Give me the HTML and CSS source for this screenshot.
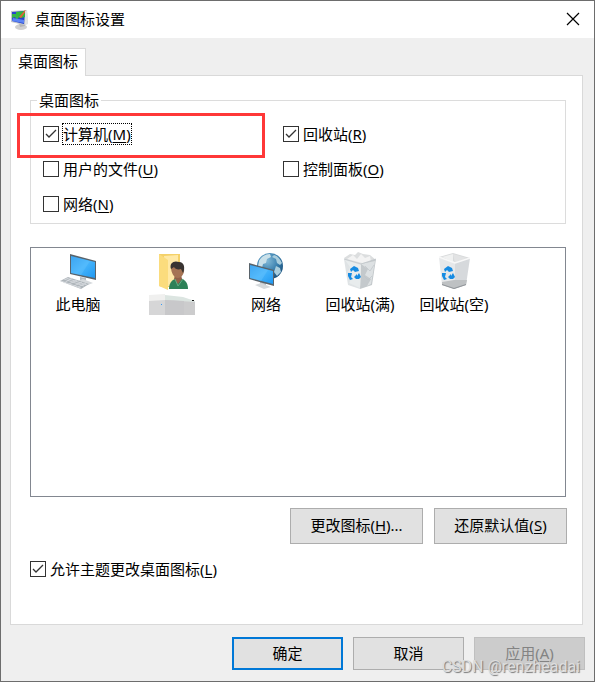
FILE: index.html
```html
<!DOCTYPE html>
<html lang="zh-CN">
<head>
    <meta charset="UTF-8">
    <meta name="viewport" content="width=device-width, initial-scale=1.0">
    <title>桌面图标设置</title>
    <link rel="stylesheet" href="styles.css">
</head>
<body>
    <div class="window">
        <header class="titlebar">
            <svg class="app-icon" width="20" height="22" viewBox="0 0 20 22">
                <ellipse cx="11" cy="18" rx="6" ry="3" fill="#d0d0d0"/>
                <path d="M9 14l5-1 1 4-5 1z" fill="#b4b4b4"/>
                <path d="M1 2l16-1 1 14-4 1-13-3z" fill="#c4c8cc"/>
                <path d="M2 3l13-1-1 13-12-3z" fill="#2742cf"/>
                <path d="M6 3l9-1v6l-4 1-5-2z" fill="#2fb93a"/>
                <path d="M2 5l4 0 3 3-2 3-2-3-3 1z" fill="#35b54a"/>
                <path d="M3 9l11 2v3l-12-2z" fill="#5b84f5"/>
                <path d="M9 8l6-7 1 1-5 7z" fill="#e0603a"/>
                <path d="M15 2l2-1 1 14-3 0z" fill="#dfe2e4"/>
            </svg>
            <h1 class="title">桌面图标设置</h1>
            <button class="close" aria-label="关闭">
                <svg width="14" height="14" viewBox="0 0 14 14">
                    <path d="M1 1l12 12M13 1L1 13" stroke="#000" stroke-width="1.2" fill="none"/>
                </svg>
            </button>
        </header>

        <main class="content">
            <button class="tab" role="tab" aria-selected="true">桌面图标</button>
            <section class="panel">
                <fieldset class="group">
                    <legend>桌面图标</legend>
                    <div class="options">
                        <label class="check"><input type="checkbox" checked><span class="focused">计算机(<u>M</u>)</span></label>
                        <label class="check"><input type="checkbox" checked><span>回收站(<u>R</u>)</span></label>
                        <label class="check"><input type="checkbox"><span>用户的文件(<u>U</u>)</span></label>
                        <label class="check"><input type="checkbox"><span>控制面板(<u>O</u>)</span></label>
                        <label class="check"><input type="checkbox"><span>网络(<u>N</u>)</span></label>
                    </div>
                    <div class="highlight"></div>
                </fieldset>

                <ul class="icon-list">
                    <li>
                        <svg width="40" height="40" viewBox="0 0 40 40">
                            <defs>
                                <linearGradient id="screen" x1="0" y1="0" x2="1" y2="1">
                                    <stop offset="0" stop-color="#2492e8"/>
                                    <stop offset=".5" stop-color="#46b4fb"/>
                                    <stop offset="1" stop-color="#1f98f2"/>
                                </linearGradient>
                            </defs>
                            <path d="M22 25l6 1v4l-6-1z" fill="#b5bcc2"/>
                            <path d="M17 30l8-3 10 4-8 3z" fill="#d5d9dc"/>
                            <path d="M12 2l26 7v19l-26-6z" fill="#59636b"/>
                            <path d="M13 4l24 6v16l-24-5z" fill="url(#screen)"/>
                            <path d="M13 4l19 5-9 14-10-2z" fill="#6bc5ff" opacity=".35"/>
                            <path d="M2 29l8-4 21 7-8 5z" fill="#aeb5ba"/>
                            <path d="M3 29l20 7M6 27l20 7M8 26l21 7M6 31l8-5M11 32l8-4M16 34l8-4M20 35l8-4" stroke="#dfe3e6" stroke-width=".7" fill="none"/>
                        </svg>
                        <span>此电脑</span>
                    </li>
                    <li>
                        <svg width="40" height="40" viewBox="0 0 40 40">
                            <path d="M7 2h21v33h-17l-4-1z" fill="#f4d169"/>
                            <path d="M12 4l14-1v31h-12z" fill="#ffe9a6"/>
                            <path d="M7 2l9 6v30l-9-4z" fill="#fbdc7d"/>
                            <path d="M17 37c0-7 4-10 9-11 6 0 10 4 10 11z" fill="#2d8158"/>
                            <path d="M22 27l4 5 4-5-1-4h-6z" fill="#916249"/>
                            <path d="M19 15c0-5 12-6 13 1 1 6-3 10-6 10-4 0-7-5-7-11z" fill="#a67454"/>
                            <path d="M19 17c-2-6 3-9 8-7 6 0 6 7 4 11l-2-4c-3 1-6 0-7-2-1 1-2 1-3 2z" fill="#393432"/>
                            <path d="M23 27l3 7M31 27l-5 7" stroke="#62ab82" fill="none"/>
                        </svg>
                        <svg class="redacted" width="46" height="22" viewBox="0 0 46 22" role="img" aria-label="用户">
                            <path d="M0 1l16-1v7H0z" fill="#f0f0ef"/>
                            <path d="M16 1l18 2 12 4v3L16 6z" fill="#dce5e1"/>
                            <path d="M0 7l16-1v15H0z" fill="#d6d6d7"/>
                            <path d="M16 6l30 2v13H16z" fill="#cccccd"/>
                            <path d="M16 6l19 1v14H16z" fill="#c8c8ca"/>
                            <path d="M12 10h1v1h-1z" fill="#3799f5"/>
                            <path d="M43 6h2v1h-2z" fill="#111"/>
                        </svg>
                    </li>
                    <li>
                        <svg width="40" height="40" viewBox="0 0 40 40">
                            <defs>
                                <radialGradient id="globe" cx=".4" cy=".3" r=".7">
                                    <stop offset="0" stop-color="#82b9d7"/>
                                    <stop offset=".6" stop-color="#397fae"/>
                                    <stop offset="1" stop-color="#1b527e"/>
                                </radialGradient>
                            </defs>
                            <circle cx="24" cy="14" r="13" fill="url(#globe)"/>
                            <path d="M13 9c2-4 6-7 11-7l1 3-4 2-1 4-3 1-1 4-4-2z" fill="#c9e0e9"/>
                            <path d="M28 3c4 1 6 4 8 8l-2 2-3-2-1-4-4-2zM30 14l4 2 1 4-4 4-3-4z" fill="#a9cddd"/>
                            <path d="M14 28l6 2v4l-6-1z" fill="#b8c0c5"/>
                            <path d="M9 33l6-2 10 4-7 2z" fill="#d5d9dc"/>
                            <path d="M3 11l25 7v16L3 27z" fill="#59636b"/>
                            <path d="M4 13l23 6v13L4 26z" fill="url(#screen)"/>
                            <path d="M4 13l18 5-7 11-11-3z" fill="#6bc5ff" opacity=".4"/>
                        </svg>
                        <span>网络</span>
                    </li>
                    <li>
                        <svg width="40" height="40" viewBox="0 0 40 40">
                            <path d="M4 6l6-4 5 1 3-3 5 2 7 1 6 5-5 5H10z" fill="#dcdedf"/>
                            <path d="M7 7l6-4 4 4 4-5 4 4 5-2 1 6-9 1z" fill="#f3f3f3"/>
                            <path d="M4 7l17 5-1 25-12-4z" fill="#dfe3e5"/>
                            <path d="M21 12l15-5-4 26-12 4z" fill="#c4c9cc"/>
                            <path d="M5 8l5 7-2 5 5 3-4 8 11 5 1-23zM21 12l7 5-3 6 6 4-4 7 4-2 4-23z" fill="#eff1f2" opacity=".6"/>
                            <path d="M4 7l17 5 15-5M25 14l5 5 4-6M24 24l4 4 4-4" stroke="#bfc4c8" stroke-width=".7" fill="none"/>
                            <path d="M10 17l4-3 4 2 1 3-4 1-2-2-2 2zM8 21l4 0-1 4 2 2-3 1-2-4zM14 25l3-3 0 2 2-3 2 4-2 2-3 0z" fill="#168be2"/>
                        </svg>
                        <span>回收站(满)</span>
                    </li>
                    <li>
                        <svg width="40" height="40" viewBox="0 0 40 40">
                            <path d="M5 5l14-4 17 5-15 6z" fill="#d8dadb"/>
                            <path d="M8 5l11-3v7l2 2z" fill="#f0f1f1"/>
                            <path d="M19 2l14 4-12 5z" fill="#e2e3e4"/>
                            <path d="M5 5l16 6-1 26-12-4z" fill="#e6e8ea"/>
                            <path d="M21 11l15-5-4 27-12 4z" fill="#d6d9dc"/>
                            <path d="M8 30l12-2 13 0-1 5-12 4-12-4z" fill="#bec1c3"/>
                            <path d="M8 32l12 4 12-4v1l-12 4-12-4z" fill="#8f9498"/>
                            <path d="M5 5l16 6 15-5" stroke="#f8f8f8" stroke-width="1.5" fill="none"/>
                            <path d="M10 17l4-3 4 2 1 3-4 1-2-2-2 2zM8 21l4 0-1 4 2 2-3 1-2-4zM14 25l3-3 0 2 2-3 2 4-2 2-3 0z" fill="#168be2"/>
                        </svg>
                        <span>回收站(空)</span>
                    </li>
                </ul>

                <div class="icon-actions">
                    <button class="btn">更改图标(<u>H</u>)...</button>
                    <button class="btn">还原默认值(<u>S</u>)</button>
                </div>

                <label class="check"><input type="checkbox" checked><span>允许主题更改桌面图标(<u>L</u>)</span></label>
            </section>
        </main>

        <footer class="footer">
            <button class="btn primary">确定</button>
            <button class="btn">取消</button>
            <button class="btn" disabled>应用(<u>A</u>)</button>
        </footer>
        <div class="watermark">CSDN @renzheadai</div>
    </div>
</body>
</html>
```
FILE: styles.css
```css
* {
    box-sizing: border-box;
}

body {
    margin: 0;
    font-family: 'Noto Sans', 'Noto Sans CJK SC', sans-serif;
    font-size: 15px;
    line-height: 20px;
    color: #000;
}

button {
    font: inherit;
    color: inherit;
}

u {
    text-underline-offset: 2px;
    text-decoration-thickness: 1px;
}

.window {
    position: relative;
    display: flex;
    flex-direction: column;
    min-height: 100vh;
    background: #efefef;
    border: 1px solid #6d6d6d;
}

.titlebar {
    display: flex;
    align-items: center;
    gap: 5px;
    height: 37px;
    padding-left: 9px;
    background: #fff;
}

.title {
    flex: 1;
    margin: 0;
    padding-bottom: 2px;
    font-size: 15px;
    font-weight: normal;
}

.close {
    display: flex;
    align-items: center;
    justify-content: center;
    width: 42px;
    height: 100%;
    padding: 0 0 2px;
    border: none;
    background: none;
}

.content {
    flex: 1;
    display: flex;
    flex-direction: column;
    align-items: flex-start;
    padding: 10px 11px 0 9px;
}

.tab {
    height: 28px;
    padding: 0 7px 3px;
    margin-bottom: -1px;
    background: #fff;
    border: 1px solid #d9d9d9;
    border-bottom: none;
    z-index: 1;
}

.panel {
    flex: 1;
    width: 100%;
    padding: 14px 16px 20px 19px;
    background: #fff;
    border: 1px solid #d9d9d9;
}

.group {
    position: relative;
    min-width: 0;
    margin: 0 0 23px;
    padding: 6px 12px 2px;
    border: 1px solid #dcdcdc;
}

.group legend {
    margin-left: -6px;
    padding: 0 2px;
}

.options {
    display: grid;
    grid-template-columns: 8fr 9fr;
    grid-auto-rows: 35px;
    align-items: center;
}

.check {
    display: flex;
    align-items: center;
    gap: 4px;
}

.check input {
    appearance: none;
    width: 16px;
    height: 16px;
    margin: 0;
    border: 1px solid #333;
    background: #fff;
}

.check input:checked {
    background: url("data:image/svg+xml,%3Csvg xmlns='http://www.w3.org/2000/svg' viewBox='0 0 14 14'%3E%3Cpath d='M2 7l3 3 7-7' fill='none' stroke='%23333' stroke-width='1.3'/%3E%3C/svg%3E");
}

.focused {
    outline: 1px dotted #000;
}

/* red frame around the first option */
.highlight {
    position: absolute;
    top: 3px;
    left: -14px;
    width: 248px;
    height: 45px;
    border: 3px solid #ff3838;
    pointer-events: none;
}

.icon-list {
    display: flex;
    flex-wrap: wrap;
    align-content: flex-start;
    height: 250px;
    margin: 0 0 11px;
    padding: 4px 0 0;
    list-style: none;
    border: 1px solid #828790;
}

.icon-list li {
    display: flex;
    flex-direction: column;
    align-items: center;
    width: 94px;
    height: 66px;
    gap: 2px;
}

.icon-actions {
    display: flex;
    justify-content: flex-end;
    gap: 11px;
    margin: 0 -1px 15px 0;
}

.btn {
    width: 111px;
    height: 33px;
    padding: 0 0 2px;
    background: #e1e1e1;
    border: 1px solid #adadad;
}

.icon-actions .btn {
    width: 133px;
    height: 36px;
}

.btn.primary {
    border: 2px solid #0078d7;
}

.btn:disabled {
    color: #838383;
    background: #ccc;
    border-color: #bfbfbf;
}

.footer {
    display: flex;
    justify-content: flex-end;
    gap: 10px;
    padding: 12px 9px 11px;
}

.watermark {
    position: absolute;
    right: 14px;
    bottom: 4px;
    font-family: Roboto, sans-serif;
    font-size: 16px;
    color: #ddd;
    text-shadow: 1px 1px 1px #777;
    pointer-events: none;
}
```
